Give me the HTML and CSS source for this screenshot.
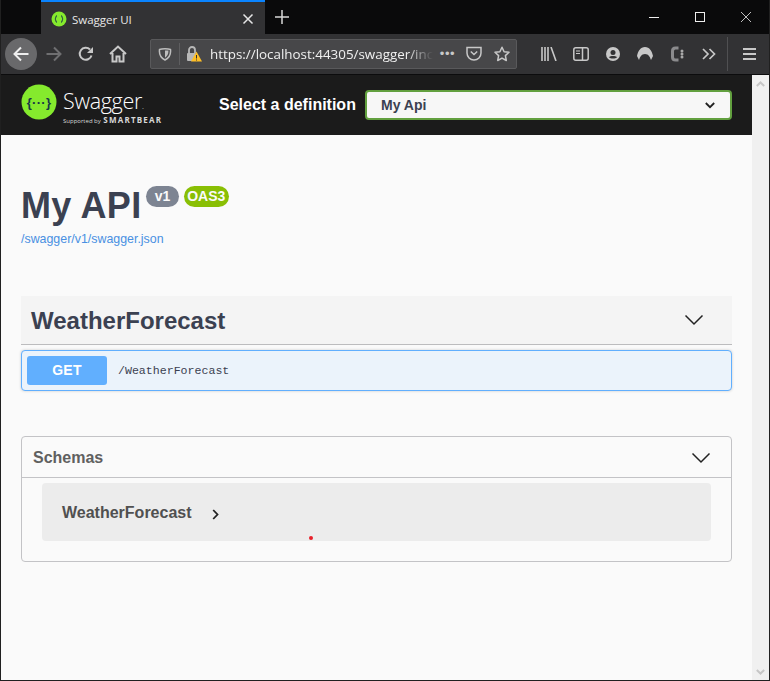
FILE: index.html
```html
<!DOCTYPE html>
<html lang="en">
  <head>
    <meta charset="UTF-8" />
    <meta name="viewport" content="width=device-width, initial-scale=1.0" />
    <title>Swagger UI</title>

    <link rel="stylesheet" href="styles.css">
  </head>

  <body>
    <div class="window">
      <div class="titlebar">
        <div class="tab">
          <svg class="tab-icon" width="16" height="16" viewBox="0 0 16 16">
            <circle cx="8" cy="8" r="7.5" fill="#85ea2d" />
            <path d="M6 4.500C4.600 4.500 5.200 7.400 4 8c1.200.6.6 3.500 2 3.500M10 4.500c1.400 0 .8 2.900 2 3.500-1.200.6-.6 3.500-2 3.500" fill="none" stroke="#173647" stroke-width="1" />
          </svg>
          <span class="tab-title">Swagger UI</span>
          <svg class="tab-close" width="12" height="12" viewBox="0 0 12 12">
            <path d="M1.500 1.500l9 9M10.500 1.500l-9 9" stroke="#e6e6e6" stroke-width="1.500" />
          </svg>
        </div>
        <svg class="new-tab" width="14" height="14" viewBox="0 0 14 14">
          <path d="M7 0v14M0 7h14" stroke="#d8d8d8" stroke-width="1.500" />
        </svg>
        <div class="window-controls">
          <svg width="46" height="12" viewBox="0 0 46 12"><path d="M18 6.500h10" stroke="#eee" /></svg>
          <svg width="46" height="12" viewBox="0 0 46 12"><rect x="18.500" y="1.500" width="9" height="9" fill="none" stroke="#eee" /></svg>
          <svg width="46" height="12" viewBox="0 0 46 12"><path d="M18 1l10 10M28 1L18 11" stroke="#eee" stroke-width="0.800" /></svg>
        </div>
      </div>

      <div class="toolbar">
        <button class="tool tool-back">
          <svg width="18" height="18" viewBox="0 0 18 18"><path d="M16.500 9h-14M9 2.500L2.500 9 9 15.500" fill="none" stroke="#eee" stroke-width="2" /></svg>
        </button>
        <button class="tool tool-forward">
          <svg width="18" height="18" viewBox="0 0 18 18"><path d="M1.500 9h14M9 2.500L15.500 9 9 15.500" fill="none" stroke="#6f6f71" stroke-width="2" /></svg>
        </button>
        <button class="tool">
          <svg width="16" height="16" viewBox="0 0 16 16"><path d="M13.500 9.500A6 6 0 1 1 12 3.500" fill="none" stroke="#c8c8c8" stroke-width="2" /><path d="M15 1v6H9z" fill="#c8c8c8" /></svg>
        </button>
        <button class="tool">
          <svg width="18" height="18" viewBox="0 0 18 18"><path d="M1 9l8-7.500L17 9M3.500 8v8.500h4V11.500h3v5h4V8" fill="none" stroke="#c8c8c8" stroke-width="2" /></svg>
        </button>

        <div class="urlbar">
          <svg class="url-shield" width="14" height="14" viewBox="0 0 14 14"><path d="M1.500 2.500C4 1.500 10 1.500 12.500 2.500 13 7 11 11 7 13 3 11 1 7 1.500 2.500z" fill="none" stroke="#bdbdbd" stroke-width="1.500" /><path d="M7 3.500h3.500C10.500 7 9 9.500 7 10.800z" fill="#bdbdbd" /></svg>
          <span class="url-sep"></span>
          <svg class="url-lock" width="16" height="17" viewBox="0 0 16 17">
            <path d="M3 8V5a3 3 0 0 1 6 0v3" fill="none" stroke="#b8b8b8" stroke-width="1.800" />
            <rect x="1" y="8" width="9" height="8" rx="1" fill="#b8b8b8" />
            <path d="M10.500 6.500L16 16.500H5z" fill="#ffbf26" />
            <path d="M10.500 10v3.500M10.500 14.500v1" stroke="#333" stroke-width="1" />
          </svg>
          <span class="url-text">https://localhost:44305/swagger/inc</span>
          <span class="url-dots">•••</span>
          <svg class="url-pocket" width="16" height="15" viewBox="0 0 16 15"><path d="M1 1.500h14v5.500a7 7 0 0 1-14 0z" fill="none" stroke="#c8c8c8" stroke-width="1.500" /><path d="M4.800 5.500L8 8.500l3.200-3" fill="none" stroke="#c8c8c8" stroke-width="1.500" /></svg>
          <svg class="url-star" width="16" height="16" viewBox="0 0 16 16"><path d="M8 1.200l2.100 4.500 4.900.6-3.600 3.300.9 4.900L8 12.100l-4.300 2.400.9-4.900L1 6.300l4.900-.6z" fill="none" stroke="#c8c8c8" stroke-width="1.500" stroke-linejoin="round" /></svg>
        </div>

        <div class="tool-group">
          <button class="tool">
            <svg width="16" height="14" viewBox="0 0 16 14"><path d="M1 0v14M4 0v14M7 0v14M10 0l5 14" fill="none" stroke="#c8c8c8" stroke-width="1.600" /></svg>
          </button>
          <button class="tool">
            <svg width="16" height="14" viewBox="0 0 16 14"><rect x="0.800" y="0.800" width="14.400" height="12.400" rx="2" fill="none" stroke="#c8c8c8" stroke-width="1.500" /><path d="M9.500 1v12" stroke="#c8c8c8" stroke-width="1.500" /><path d="M3 4h4M3 6.500h4" stroke="#c8c8c8" /></svg>
          </button>
          <button class="tool">
            <svg width="14" height="14" viewBox="0 0 14 14"><circle cx="7" cy="7" r="7" fill="#c8c8c8" /><circle cx="7" cy="5.500" r="2.500" fill="#323234" /><path d="M2.800 10c2-1.500 6.400-1.500 8.400 0-1.800 2-6.600 2-8.400 0z" fill="#323234" /></svg>
          </button>
          <button class="tool">
            <svg width="16" height="13" viewBox="0 0 16 13"><path d="M8 0c4.500 0 7 4 8 9l-2 4c-1-3-2.500-6-6-6s-5 3-6 6L0 9C1 4 3.500 0 8 0z" fill="#c8c8c8" /></svg>
          </button>
          <button class="tool">
            <svg width="14" height="16" viewBox="0 0 14 16"><path d="M8.500 2H5.500C3.500 2 2.500 3 2.500 5v6c0 2 1 3 3 3h3" fill="none" stroke="#8b8b8d" stroke-width="3" /><circle cx="12" cy="5" r="1.500" fill="#a8a8a8" /><circle cx="12" cy="8" r="1.500" fill="#a8a8a8" /><circle cx="12" cy="11" r="1.500" fill="#a8a8a8" /></svg>
          </button>
          <button class="tool">
            <svg width="14" height="12" viewBox="0 0 14 12"><path d="M1 1l5 5-5 5M7.500 1l5 5-5 5" fill="none" stroke="#c8c8c8" stroke-width="1.700" /></svg>
          </button>
        </div>
        <span class="tool-sep"></span>
        <button class="tool tool-menu">
          <svg width="13" height="12" viewBox="0 0 13 12"><path d="M0 1h13M0 6h13M0 11h13" stroke="#c8c8c8" stroke-width="2" /></svg>
        </button>
      </div>

      <div class="viewport">
        <div class="page">
          <div class="topbar">
            <div class="logo">
              <svg class="logo-mark" width="36" height="36" viewBox="0 0 36 36">
                <circle cx="18" cy="18" r="17.500" fill="#85ea2d" />
                <text x="18" y="22.500" text-anchor="middle" class="logo-braces">{···}</text>
              </svg>
              <div class="logo-words">
                <span class="logo-name">Swagger<small>.</small></span>
                <span class="logo-sub">Supported by <b>SMARTBEAR</b></span>
              </div>
            </div>
            <label class="definition">Select a definition</label>
            <div class="select">
              <span>My Api</span>
              <svg width="10" height="7" viewBox="0 0 10 7"><path d="M.8 1l4.200 4.200L9.200 1" fill="none" stroke="#222" stroke-width="1.800" /></svg>
            </div>
          </div>

          <div class="content">
            <div class="info">
              <h1>My API <span class="badge badge-version">v1</span> <span class="badge badge-oas">OAS3</span></h1>
              <a href="#" class="spec-link">/swagger/v1/swagger.json</a>
            </div>

            <div class="tag">
              <h2>WeatherForecast</h2>
              <svg class="tag-arrow" width="20" height="12" viewBox="0 0 20 12"><path d="M1.500 1.500L10 10l8.500-8.500" fill="none" stroke="#222" stroke-width="1.500" /></svg>
            </div>

            <div class="opblock">
              <span class="method">GET</span>
              <span class="path">/WeatherForecast</span>
            </div>

            <section class="models">
              <div class="models-head">
                <h4>Schemas</h4>
                <svg width="20" height="12" viewBox="0 0 20 12"><path d="M1.500 1.500L10 10l8.500-8.500" fill="none" stroke="#222" stroke-width="1.500" /></svg>
              </div>
              <div class="model-box">
                <span class="model-name">WeatherForecast</span>
                <svg width="7" height="11" viewBox="0 0 7 11"><path d="M1.200 1l4.300 4.500-4.300 4.500" fill="none" stroke="#222" stroke-width="1.800" /></svg>
                <span class="cursor-dot"></span>
              </div>
            </section>
          </div>
        </div>

        <div class="scrollbar">
          <svg width="9" height="6" viewBox="0 0 9 6"><path d="M.8 5l3.700-3.500L8.200 5" fill="none" stroke="#c6c6c6" stroke-width="2" /></svg>
          <svg width="9" height="6" viewBox="0 0 9 6"><path d="M.8 1l3.700 3.500L8.200 1" fill="none" stroke="#c6c6c6" stroke-width="2" /></svg>
        </div>
      </div>
    </div>
  </body>
</html>
```

FILE: styles.css
```css
* {
  box-sizing: border-box;
}

html,
body {
  margin: 0;
  height: 100%;
  overflow: hidden;
}

body {
  font-family: "Liberation Sans", Arial, sans-serif;
  background-color: #1c1c1e;
}

.window {
  display: flex;
  flex-direction: column;
  height: 681px;
  border-left: 1px solid #202020;
  border-right: 1px solid #202020;
  border-bottom: 1px solid #202020;
}

/* browser chrome */

.titlebar {
  display: flex;
  align-items: stretch;
  height: 34px;
  background: #0a0a0b;
}

.tab {
  display: flex;
  align-items: center;
  width: 224px;
  margin-left: 40px;
  padding: 2px 11px 0 10px;
  background: #323234;
  border-top: 2px solid #0a84ff;
}

.tab-title {
  flex: 1;
  margin-left: 5px;
  color: #e8e8e8;
  font-family: "Open Sans", sans-serif;
  font-size: 11.5px;
}

.new-tab {
  align-self: center;
  margin-left: 10px;
}

.window-controls {
  display: flex;
  align-items: center;
  margin-left: auto;
}

.toolbar {
  display: flex;
  align-items: center;
  height: 41px;
  padding: 0 0 1px 4px;
  background: #323234;
  border-bottom: 1px solid #0c0c0d;
}

.tool {
  display: flex;
  align-items: center;
  justify-content: center;
  width: 32px;
  height: 32px;
  padding: 0;
  background: none;
  border: none;
  border-radius: 50%;
}

.tool-back {
  background: #69696b;
}

.tool-forward {
  margin-left: 1px;
}

.urlbar {
  display: flex;
  align-items: center;
  width: 367px;
  height: 30px;
  margin-left: 16px;
  padding: 0 6px 0 7px;
  background: #474749;
  border: 1px solid #59595b;
  border-radius: 2px;
}

.url-sep {
  width: 1px;
  height: 22px;
  margin: 0 6px 0 7px;
  background: #5e5e60;
}

.url-text {
  margin-left: 8px;
  white-space: nowrap;
  color: #f0f0f0;
  font-family: "Open Sans", sans-serif;
  font-size: 13.4px;
  -webkit-mask-image: linear-gradient(to right, #000 88%, transparent);
  mask-image: linear-gradient(to right, #000 88%, transparent);
}

.url-dots {
  margin-left: auto;
  color: #c8c8c8;
  font-size: 13px;
  letter-spacing: 0.5px;
}

.url-pocket {
  margin-left: 11px;
}

.url-star {
  margin-left: 12px;
}

.tool-group {
  display: flex;
  margin-left: 16px;
}

.tool-sep {
  width: 1px;
  height: 34px;
  margin-left: 2px;
  background: #505052;
}

.tool-menu {
  margin-left: 5px;
}

/* page */

.viewport {
  display: flex;
  flex: 1;
  min-height: 0;
}

.page {
  flex: 1;
  background: #fafafa;
}

.scrollbar {
  display: flex;
  flex-direction: column;
  justify-content: space-between;
  align-items: center;
  width: 17px;
  padding: 6px 0 5px;
  background: #f0f0f0;
}

.topbar {
  display: flex;
  align-items: center;
  height: 60px;
  padding: 0 20px;
  background: #1b1b1b;
}

.logo {
  display: flex;
  align-items: center;
  width: 198px;
}

.logo-mark {
  flex-shrink: 0;
  margin-top: -6px;
}

.logo-braces {
  fill: #173647;
  font-family: "Liberation Sans", sans-serif;
  font-size: 13px;
  font-weight: bold;
  letter-spacing: 0.3px;
}

.logo-words {
  display: flex;
  flex-direction: column;
  margin-left: 6px;
  color: #fff;
  white-space: nowrap;
}

.logo-name {
  margin-top: 3px;
  font-family: "Open Sans", sans-serif;
  font-size: 21.5px;
  font-weight: 300;
  line-height: 26px;
  letter-spacing: -0.3px;
}

.logo-name small {
  font-size: 8px;
}

.logo-sub {
  margin-top: -3px;
  color: #d8d8d8;
  font-family: "Open Sans", sans-serif;
  font-size: 6px;
  line-height: 8px;
}

.logo-sub b {
  margin-left: 1px;
  font-size: 8px;
  letter-spacing: 1.2px;
}

.definition {
  width: 146px;
  color: #fff;
  font-size: 16px;
  font-weight: bold;
}

.select {
  display: flex;
  align-items: center;
  justify-content: space-between;
  width: 367px;
  height: 30px;
  padding: 0 15px 0 14px;
  background: #f7f7f7;
  border: 2px solid #62a03f;
  border-radius: 4px;
  color: #3b4151;
  font-size: 14px;
  font-weight: bold;
}

.content {
  padding: 0 20px;
}

.info {
  margin: 50px 0 50px;
}

h1 {
  margin: 0;
  color: #3b4151;
  font-size: 36px;
  line-height: 42px;
  letter-spacing: 0.3px;
  white-space: nowrap;
}

.badge {
  position: relative;
  top: -17px;
  display: inline-block;
  margin-left: -6px;
  padding: 2px 3.5px;
  border-radius: 57px;
  color: #fafafa;
  font-size: 14px;
  line-height: 17px;
  letter-spacing: 0;
  vertical-align: baseline;
}

.badge-version {
  padding: 2px 9px;
  background: #7d8492;
}

.badge-oas {
  background: #89bf04;
}

.spec-link {
  display: block;
  margin-top: 5px;
  color: #4990e2;
  font-size: 12.4px;
  line-height: 14px;
  text-decoration: none;
}

.tag {
  display: flex;
  align-items: center;
  justify-content: space-between;
  height: 49px;
  padding: 2px 28px 0 10px;
  background: #f4f4f4;
  border-bottom: 1px solid #bcbcbe;
}

.tag-arrow {
  margin-top: -3px;
}

h2 {
  margin: 0;
  color: #3b4151;
  font-size: 24px;
  font-weight: bold;
}

.opblock {
  display: flex;
  align-items: center;
  height: 41px;
  margin-top: 5px;
  padding: 0 5px;
  background: #ebf3fb;
  border: 1px solid #61affe;
  border-radius: 4px;
  box-shadow: 0 0 3px rgba(0, 0, 0, 0.19);
}

.method {
  width: 80px;
  padding: 6px 0;
  background: #61affe;
  border-radius: 3px;
  color: #fff;
  font-size: 14px;
  font-weight: bold;
  line-height: 17px;
  letter-spacing: 0.3px;
  text-align: center;
}

.path {
  margin-left: 11px;
  color: #3b4151;
  font-family: "Liberation Mono", "Courier New", monospace;
  font-size: 11.6px;
}

.models {
  height: 126px;
  margin-top: 45px;
  border: 1px solid #c3c3c6;
  border-radius: 4px;
}

.models-head {
  display: flex;
  align-items: center;
  justify-content: space-between;
  height: 41px;
  padding: 1px 20px 0 11px;
  border-bottom: 1px solid #c3c3c6;
}

h4 {
  margin: 0;
  color: #606060;
  font-size: 16px;
  font-weight: bold;
}

.model-box {
  position: relative;
  display: flex;
  align-items: center;
  height: 58px;
  margin: 5px 20px 0;
  padding: 4px 20px 0;
  background: #ececec;
  border-radius: 4px;
}

.model-name {
  margin-top: -2px;
  margin-right: 20px;
  color: #505050;
  font-size: 16px;
  font-weight: bold;
}

.cursor-dot {
  position: absolute;
  left: 267px;
  top: 53px;
  width: 4px;
  height: 4px;
  background: #e8202a;
  border-radius: 50%;
}
```
